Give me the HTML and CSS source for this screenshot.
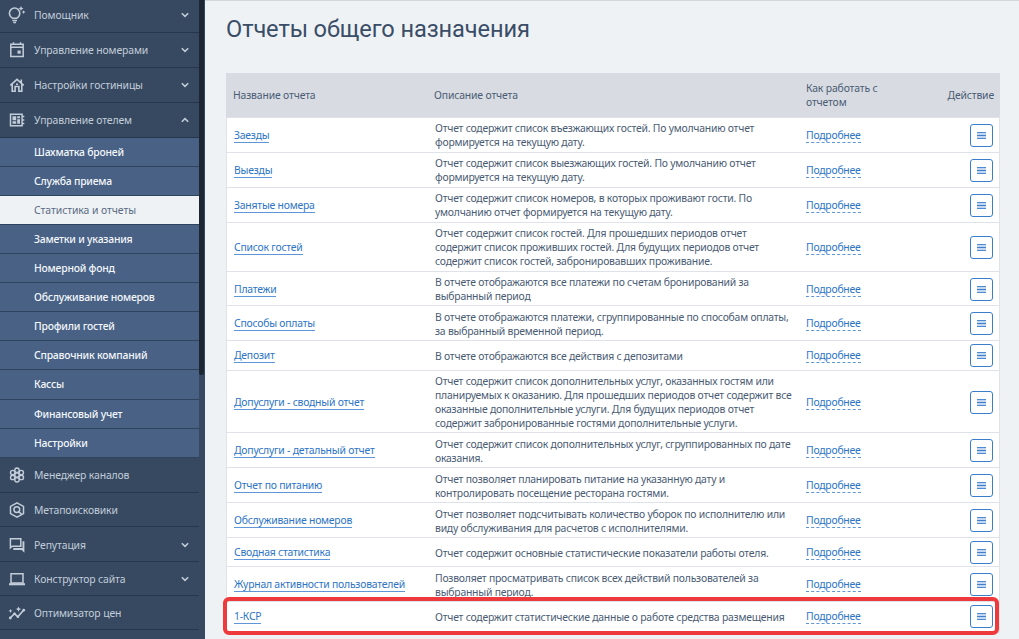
FILE: index.html
```html
<!DOCTYPE html>
<html lang="ru">
<head>
<meta charset="utf-8">
<title>Отчеты общего назначения</title>
<link rel="stylesheet" href="styles.css">
</head>
<body>
<svg class="defs" aria-hidden="true">
  <symbol id="down" viewBox="0 0 10 10"><path d="M1.8 3.2 5 6.4 8.2 3.2" fill="none" stroke="currentColor" stroke-width="1.5"/></symbol>
  <symbol id="up" viewBox="0 0 10 10"><path d="M1.8 6.8 5 3.6 8.2 6.8" fill="none" stroke="currentColor" stroke-width="1.5"/></symbol>
</svg>
<div class="app">
  <aside class="sidebar">
    <nav class="menu">
      <a class="item item-first"><svg class="icon" viewBox="0 0 18 18"><g fill="none" stroke="currentColor" stroke-width="1.5"><path d="M4.400 12.200C2.600 11 1.400 9.400 1.400 7.300A5.200 5.200 0 0 1 6.600 2.100C9.500 2.100 11.800 4.400 11.800 7.300 11.800 9.400 10.700 11 8.800 12.200ZM4.300 14.400h4.700M5.300 16.400h2.700"/></g><path fill="currentColor" d="M13 0l.8 1.700 1.700.8-1.700.8-.8 1.700-.8-1.700-1.700-.8 1.700-.8zM15.600 4.200l.6 1.300 1.300.6-1.300.6-.6 1.300-.6-1.300-1.300-.6 1.300-.6z"/></svg><span>Помощник</span><svg class="chev"><use href="#down"/></svg></a>
      <a class="item"><svg class="icon" viewBox="0 0 18 18"><path fill="none" stroke="currentColor" stroke-width="1.500" d="M2.800 3.200h12.400v12.400H2.800zM2.800 6.200h12.400M5.500 1.300v2M12.500 1.300v2"/><path fill="currentColor" d="M9.500 9.500h3.200v3.200H9.500z"/></svg><span>Управление номерами</span><svg class="chev"><use href="#down"/></svg></a>
      <a class="item"><svg class="icon" viewBox="0 0 18 18"><path fill="none" stroke="currentColor" stroke-width="1.600" d="M2.300 9.300 9 3.300l6.700 6M4.200 8v7.300h2.900V10.500h3.800v4.800h2.900V8M13.300 6.800V3.500M8 8.300h2"/></svg><span>Настройки гостиницы</span><svg class="chev"><use href="#down"/></svg></a>
      <a class="item"><svg class="icon" viewBox="0 0 18 18"><path fill="none" stroke="currentColor" stroke-width="1.500" d="M2.500 3.300h11.600v11.400H2.500zM14 5.400h2.300M14 9h2.300M14 12.600h2.300"/><path fill="currentColor" d="M4.500 5.300h3.700v4H4.500zM9.200 5.300H12v2H9.200zM9.200 8.300H12v4.400H9.200zM4.500 10.300h3.700v2.400H4.500z"/></svg><span>Управление отелем</span><svg class="chev"><use href="#up"/></svg></a>
      <div class="submenu">
        <a class="sub">Шахматка броней</a>
        <a class="sub">Служба приема</a>
        <a class="sub sub-active">Статистика и отчеты</a>
        <a class="sub">Заметки и указания</a>
        <a class="sub">Номерной фонд</a>
        <a class="sub">Обслуживание номеров</a>
        <a class="sub">Профили гостей</a>
        <a class="sub">Справочник компаний</a>
        <a class="sub">Кассы</a>
        <a class="sub">Финансовый учет</a>
        <a class="sub">Настройки</a>
      </div>
      <a class="item"><svg class="icon" viewBox="0 0 18 18"><g fill="none" stroke="currentColor" stroke-width="1.400"><circle cx="9" cy="9" r="2.200"/><circle cx="9" cy="4.200" r="2.200"/><circle cx="9" cy="13.800" r="2.200"/><circle cx="4.700" cy="6.600" r="2.200"/><circle cx="13.300" cy="6.600" r="2.200"/><circle cx="4.700" cy="11.400" r="2.200"/><circle cx="13.300" cy="11.400" r="2.200"/></g></svg><span>Менеджер каналов</span></a>
      <a class="item"><svg class="icon" viewBox="0 0 18 18"><g fill="none" stroke="currentColor" stroke-width="1.500"><path d="M9 1.800 15.500 5.400v7.200L9 16.200 2.500 12.600V5.400z"/><circle cx="8.800" cy="8.600" r="2.900"/><path d="M10.800 10.600l3.200 3.200"/></g></svg><span>Метапоисковики</span></a>
      <a class="item"><svg class="icon" viewBox="0 0 18 18"><path fill="none" stroke="currentColor" stroke-width="1.500" d="M2.400 2.700h10.400v7.600H4.200l-1.800 1.600z"/><path fill="currentColor" d="M14.500 5.200h1.900v11.500l-2.800-2.800H5.300V12h9.200z"/></svg><span>Репутация</span><svg class="chev"><use href="#down"/></svg></a>
      <a class="item item-site"><svg class="icon" viewBox="0 0 18 18"><path fill="none" stroke="currentColor" stroke-width="1.500" d="M3 3.800h12v9.200H3z"/><path fill="currentColor" d="M1 13.200h16v2.100H1z"/></svg><span>Конструктор сайта</span><svg class="chev"><use href="#down"/></svg></a>
      <a class="item"><svg class="icon" viewBox="0 0 18 18"><path fill="none" stroke="currentColor" stroke-width="1.600" d="M2.200 14 6.500 9.700l3.300 3.100L15.800 6"/><path fill="currentColor" d="M2.500 4.900l.6 1.400 1.400.6-1.400.6-.6 1.400-.6-1.400L.5 6.900l1.400-.6zM10.500 2.500l.8 1.800 1.800.8-1.800.8-.8 1.800-.8-1.800-1.800-.8 1.800-.8z"/><circle cx="2.300" cy="14" r="1.400" fill="currentColor"/><circle cx="6.500" cy="9.800" r="1.300" fill="currentColor"/><circle cx="9.900" cy="12.700" r="1.300" fill="currentColor"/><circle cx="15.700" cy="6.200" r="1.400" fill="currentColor"/></svg><span>Оптимизатор цен</span></a>
      <a class="item"></a>
    </nav>
    <div class="scroll"><div class="thumb"></div></div>
  </aside>
  <main class="content">
    <h1 class="title">Отчеты общего назначения</h1>
    <section class="table">
      <div class="row head"><span>Название отчета</span><span>Описание отчета</span><span class="how">Как работать с<br>отчетом</span><span class="act">Действие</span></div>
      <div class="row two"><span><a class="link">Заезды</a></span><p class="desc">Отчет содержит список въезжающих гостей. По умолчанию отчет<br>формируется на текущую дату.</p><span><a class="more">Подробнее</a></span><button class="btn"><i class="bars"></i></button></div>
      <div class="row two"><span><a class="link">Выезды</a></span><p class="desc">Отчет содержит список выезжающих гостей. По умолчанию отчет<br>формируется на текущую дату.</p><span><a class="more">Подробнее</a></span><button class="btn"><i class="bars"></i></button></div>
      <div class="row two"><span><a class="link">Занятые номера</a></span><p class="desc">Отчет содержит список номеров, в которых проживают гости. По<br>умолчанию отчет формируется на текущую дату.</p><span><a class="more">Подробнее</a></span><button class="btn"><i class="bars"></i></button></div>
      <div class="row three"><span><a class="link">Список гостей</a></span><p class="desc">Отчет содержит список гостей. Для прошедших периодов отчет<br>содержит список проживших гостей. Для будущих периодов отчет<br>содержит список гостей, забронировавших проживание.</p><span><a class="more">Подробнее</a></span><button class="btn"><i class="bars"></i></button></div>
      <div class="row two"><span><a class="link">Платежи</a></span><p class="desc">В отчете отображаются все платежи по счетам бронирований за<br>выбранный период</p><span><a class="more">Подробнее</a></span><button class="btn"><i class="bars"></i></button></div>
      <div class="row two"><span><a class="link">Способы оплаты</a></span><p class="desc">В отчете отображаются платежи, сгруппированные по способам оплаты,<br>за выбранный временной период.</p><span><a class="more">Подробнее</a></span><button class="btn"><i class="bars"></i></button></div>
      <div class="row one"><span><a class="link">Депозит</a></span><p class="desc">В отчете отображаются все действия с депозитами</p><span><a class="more">Подробнее</a></span><button class="btn"><i class="bars"></i></button></div>
      <div class="row four"><span><a class="link">Допуслуги - сводный отчет</a></span><p class="desc">Отчет содержит список дополнительных услуг, оказанных гостям или<br>планируемых к оказанию. Для прошедших периодов отчет содержит все<br>оказанные дополнительные услуги. Для будущих периодов отчет<br>содержит забронированные гостями дополнительные услуги.</p><span><a class="more">Подробнее</a></span><button class="btn"><i class="bars"></i></button></div>
      <div class="row two"><span><a class="link">Допуслуги - детальный отчет</a></span><p class="desc">Отчет содержит список дополнительных услуг, сгруппированных по дате<br>оказания.</p><span><a class="more">Подробнее</a></span><button class="btn"><i class="bars"></i></button></div>
      <div class="row two"><span><a class="link">Отчет по питанию</a></span><p class="desc">Отчет позволяет планировать питание на указанную дату и<br>контролировать посещение ресторана гостями.</p><span><a class="more">Подробнее</a></span><button class="btn"><i class="bars"></i></button></div>
      <div class="row two"><span><a class="link">Обслуживание номеров</a></span><p class="desc">Отчет позволяет подсчитывать количество уборок по исполнителю или<br>виду обслуживания для расчетов с исполнителями.</p><span><a class="more">Подробнее</a></span><button class="btn"><i class="bars"></i></button></div>
      <div class="row one"><span><a class="link">Сводная статистика</a></span><p class="desc">Отчет содержит основные статистические показатели работы отеля.</p><span><a class="more">Подробнее</a></span><button class="btn"><i class="bars"></i></button></div>
      <div class="row two"><span><a class="link">Журнал активности пользователей</a></span><p class="desc">Позволяет просматривать список всех действий пользователей за<br>выбранный период.</p><span><a class="more">Подробнее</a></span><button class="btn"><i class="bars"></i></button></div>
      <div class="row one marked"><span><a class="link">1-КСР</a></span><p class="desc">Отчет содержит статистические данные о работе средства размещения</p><span><a class="more">Подробнее</a></span><button class="btn"><i class="bars"></i></button></div>
    </section>
  </main>
</div>
</body>
</html>
```
FILE: styles.css
```css
* { box-sizing: border-box; }
body {
  margin: 0;
  height: 639px;
  overflow: hidden;
  background: #eef2f5;
  color: #4a5b74;
  font: 10.4px/14px "Noto Sans", sans-serif;
  letter-spacing: -0.22px;
}
.defs { display: none; }
.app { display: flex; height: 639px; overflow: hidden; }

.sidebar { display: flex; width: 205px; flex: none; background: #364961; }
.menu { width: 199px; height: 639px; overflow: hidden; }
.item {
  display: grid;
  grid-template-columns: 18px 1fr 10px;
  column-gap: 8px;
  align-items: center;
  height: 34.9px;
  padding: 0 9px 0 8px;
  border-bottom: 1px solid #26364b;
  color: #c3cdd9;
  letter-spacing: -0.12px;
}
.item-first { height: 33px; padding-bottom: 2px; }
.submenu ~ .item { padding-top: 1px; }
.item-site { height: 33.2px; }
.icon { width: 18px; height: 18px; }
.chev { width: 10px; height: 10px; }
.submenu { background: #486185; }
.sub {
  display: flex;
  align-items: center;
  height: 29.1px;
  padding-left: 34px;
  border-bottom: 1px solid #2f435c;
  color: #f4f7fa;
  font-weight: 500;
}
.sub-active { background: #eef2f5; color: #5a6b82; font-weight: 400; letter-spacing: -0.06px; }
.scroll { width: 6px; background: #364961; }
.thumb { width: 5px; height: 375px; background: #1c2733; border-radius: 0 0 3px 3px; }

.content {
  flex: 1;
  padding: 13px 19px 0 21px;
  border-top: 1px solid #d3d7db;
}
.title {
  margin: 0 0 29px;
  color: #3a4d67;
  font: 400 23.6px/30px Roboto, sans-serif;
  letter-spacing: -0.1px;
}
.table { background: #fff; border: 1px solid #dfe3e8; border-top: 0; }
.row {
  position: relative;
  display: grid;
  grid-template-columns: 201px 371px 1fr auto;
  align-items: center;
  padding: 1px 6px 0 7px;
  border-bottom: 1px solid #dfe2e8;
}
.head { height: 45px; margin: 0 -1px; padding: 0 6px 0 7px; background: #d8dbe2; letter-spacing: -0.15px; }
.how { padding-left: 1px; }
.one { height: 29.25px; }
.two { height: 34.9px; }
.three { height: 48.9px; }
.four { height: 62.9px; }
.desc { margin: 0; white-space: nowrap; }
.link, .more { display: inline-block; color: #2c74c6; line-height: 14px; border-bottom: 1px solid #5f96d8; }
.more { border-bottom-style: dashed; }
.btn {
  display: grid;
  place-items: center;
  width: 23px;
  height: 23px;
  padding: 0;
  border: 1px solid #3a7ecb;
  border-radius: 3px;
  background: #fff;
}
.bars {
  width: 9px;
  height: 7px;
  background: linear-gradient(#4d8bd3 1px, #c3d7f0 1px 3px, #4080cc 3px 4px, #c3d7f0 4px 6px, #4d8bd3 6px);
}
.marked::after {
  content: "";
  position: absolute;
  inset: -5px 0 -4px -4px;
  border: 4px solid #ef3a3d;
  border-radius: 6px;
}
```
